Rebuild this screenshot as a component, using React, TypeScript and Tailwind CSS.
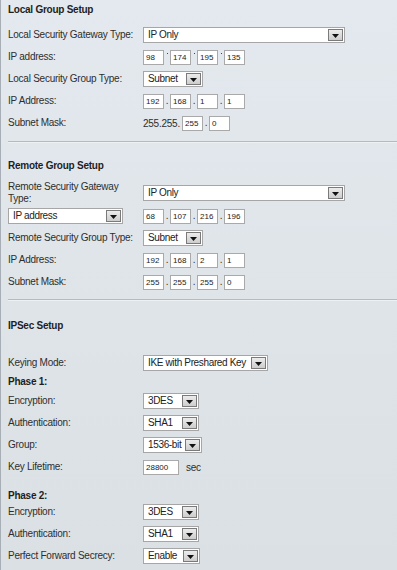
import React, { Fragment } from 'react';

const Caret = () => (
  <svg width="7" height="4" viewBox="0 0 7 4">
    <path d="M0 0h7L3.5 4z" fill="#111" />
  </svg>
);

function Select({ value, width }: { value: string; width: string }) {
  return (
    <div className={`flex h-[16px] shrink-0 items-stretch border border-[#a6a6a6] bg-white ${width}`}>
      <span className="min-w-0 flex-1 overflow-hidden whitespace-nowrap pl-[4px] text-[10px] leading-[14px] tracking-[-0.35px] text-[#222]">{value}</span>
      <span className="m-px flex w-[15px] shrink-0 items-end justify-center border border-[#7a7a7a] bg-linear-to-b from-[#ececec] to-[#cdcdcd] pb-[2px]">
        <Caret />
      </span>
    </div>
  );
}

function Box({ value, width = 'w-[21px]' }: { value: string; width?: string }) {
  return (
    <div className={`h-[15px] shrink-0 border border-[#a9a9a9] bg-white pl-[2px] text-[8px] leading-[13px] tracking-normal text-[#222] ${width}`}>
      {value}
    </div>
  );
}

function Dot({ raised }: { raised?: boolean }) {
  if (raised) {
    return (
      <span className="flex h-[15px] w-[6px] justify-center">
        <span className="mt-[3px] h-px w-px bg-[#444]" />
      </span>
    );
  }
  return <span className="flex h-[15px] w-[6px] items-end justify-center pb-[3px] text-[10px] leading-none text-[#333]">.</span>;
}

function Ip({ parts, raised }: { parts: string[]; raised?: boolean }) {
  return (
    <div className="flex items-center">
      {parts.map((p, i) => (
        <Fragment key={i}>
          {i > 0 && <Dot raised={raised} />}
          <Box value={p} />
        </Fragment>
      ))}
    </div>
  );
}

function Row({ label, children, height = 'h-[22px]' }: { label: React.ReactNode; children?: React.ReactNode; height?: string }) {
  return (
    <div className={`flex items-center ${height}`}>
      <div className="w-[135px] shrink-0 whitespace-nowrap leading-[12px]">{label}</div>
      {children}
    </div>
  );
}

function Header({ children, className = '' }: { children: React.ReactNode; className?: string }) {
  return <div className={`h-[14px] text-[10px] font-bold leading-[14px] text-[#1e1e1e] ${className}`}>{children}</div>;
}

function Separator({ className = '' }: { className?: string }) {
  return (
    <div className={className}>
      <div className="h-px bg-[#b4bac0]" />
      <div className="h-px bg-[#eef1f3]" />
    </div>
  );
}

export default function App() {
  return (
    <div className="min-h-[570px] w-full border-l border-[#a7aeb5] bg-linear-to-b from-[#e3e9ee] to-[#dbe0e4] pl-[7px] pt-[3px] font-['Liberation_Sans',Arial,sans-serif] text-[10px] tracking-[-0.25px] text-[#2e2e2e]">
      {/* Local */}
      <Header>Local Group Setup</Header>
      <div className="mt-[7px]">
        <Row label="Local Security Gateway Type:">
          <Select value="IP Only" width="w-[202px]" />
        </Row>
        <Row label="IP address:">
          <Ip parts={['98', '174', '195', '135']} raised />
        </Row>
        <Row label="Local Security Group Type:">
          <Select value="Subnet" width="w-[60px]" />
        </Row>
        <Row label="IP Address:">
          <Ip parts={['192', '168', '1', '1']} />
        </Row>
        <Row label="Subnet Mask:">
          <div className="flex items-center">
            <span className="w-[39px] shrink-0 text-[10px]">255.255.</span>
            <Box value="255" />
            <Dot />
            <Box value="0" />
          </div>
        </Row>
      </div>

      <Separator className="mt-[7px]" />

      {/* Remote */}
      <Header className="mt-[16px]">Remote Group Setup</Header>
      <div className="mt-[8px]">
        <Row
          height="h-[24px]"
          label={
            <>
              Remote Security Gateway
              <br />
              Type:
            </>
          }
        >
          <Select value="IP Only" width="w-[202px]" />
        </Row>
        <Row label={<Select value="IP address" width="w-[115px]" />}>
          <Ip parts={['68', '107', '216', '196']} />
        </Row>
        <Row label="Remote Security Group Type:">
          <Select value="Subnet" width="w-[60px]" />
        </Row>
        <Row label="IP Address:">
          <Ip parts={['192', '168', '2', '1']} />
        </Row>
        <Row label="Subnet Mask:">
          <Ip parts={['255', '255', '255', '0']} />
        </Row>
      </div>

      <Separator className="mt-[6px]" />

      {/* IPSec */}
      <Header className="mt-[18px]">IPSec Setup</Header>
      <div className="mt-[19px]">
        <Row label="Keying Mode:">
          <Select value="IKE with Preshared Key" width="w-[125px]" />
        </Row>
        <div className="h-[16px] font-bold leading-[16px] text-[#1e1e1e]">Phase 1:</div>
        <Row label="Encryption:">
          <Select value="3DES" width="w-[56px]" />
        </Row>
        <Row label="Authentication:">
          <Select value="SHA1" width="w-[56px]" />
        </Row>
        <Row label="Group:">
          <Select value="1536-bit" width="w-[59px]" />
        </Row>
        <Row label="Key Lifetime:">
          <Box value="28800" width="w-[36px]" />
          <span className="ml-[7px]">sec</span>
        </Row>
        <div className="mt-[12px] h-[11px] font-bold leading-[11px] text-[#1e1e1e]">Phase 2:</div>
        <Row label="Encryption:">
          <Select value="3DES" width="w-[56px]" />
        </Row>
        <Row label="Authentication:">
          <Select value="SHA1" width="w-[56px]" />
        </Row>
        <Row label="Perfect Forward Secrecy:">
          <Select value="Enable" width="w-[57px]" />
        </Row>
      </div>
    </div>
  );
}
